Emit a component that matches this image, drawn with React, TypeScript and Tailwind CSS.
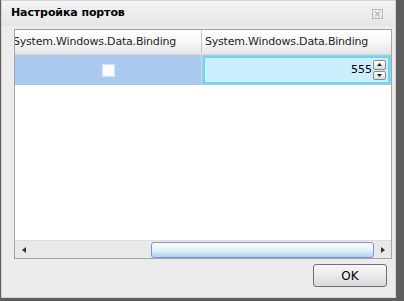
import React from 'react';

const font = { fontFamily: '"DejaVu Sans", Verdana, sans-serif' };

const App: React.FC = () => {
  return (
    <div className="w-[404px] h-[301px] bg-[#5e5e5e] flex" style={font}>
      <div className="ml-[1px] w-[395px] h-[298px] bg-[#ececec] border border-[#d4d4d4] flex flex-col">
        {/* title bar */}
        <div className="h-[25px] flex items-center justify-between pl-[9px] pr-[12px] bg-gradient-to-b from-[#f4f4f4] to-[#e6e6e6]">
          <span className="text-[11px] font-bold text-black tracking-[-0.1px]">Настройка портов</span>
          <svg width="11" height="10" viewBox="0 0 11 10" className="text-[#b8b8b8]">
            <rect x="0.5" y="0.5" width="10" height="9" fill="none" stroke="currentColor" />
            <path d="M3 2.5 L8 7.5 M8 2.5 L3 7.5" stroke="currentColor" strokeWidth="1.2" />
          </svg>
        </div>

        {/* grid */}
        <div className="mt-[3px] ml-[12px] w-[378px] h-[230px] border border-[#a5a5a5] bg-white flex flex-col overflow-hidden">
          <div className="h-[25px] flex border-b border-[#d5d5d5] bg-gradient-to-b from-[#ffffff] via-[#f7f7f7] to-[#e6e6e6] text-[11px] tracking-[-0.2px] text-[#1e1e1e]">
            <div className="w-[187px] border-r border-[#c8c8c8] flex items-center overflow-hidden">
              <span className="ml-[-2px] whitespace-nowrap">System.Windows.Data.Binding</span>
            </div>
            <div className="flex-1 flex items-center pl-[3px] whitespace-nowrap">System.Windows.Data.Binding</div>
          </div>

          <div className="h-[30px] flex">
            <div className="w-[187px] bg-[#a9c9ef] flex items-center justify-center border-r border-[#c8d8ea]">
              <div className="w-[13px] h-[13px] bg-white border border-[#d8e4f2] shadow-[inset_0_0_1px_#c0c0c0]" />
            </div>
            <div className="flex-1 bg-[#a9c9ef] p-[1px]">
              <div className="h-full border-2 border-[#6ad8ee] bg-[#cdeefc] flex items-center justify-end pr-[2px] text-[11px] text-black">
                <span className="mr-[1px]">555</span>
                <div className="w-[13px] h-[20px] flex flex-col gap-[1px]">
                  <div className="flex-1 border border-[#8a8a8a] rounded-[2px] bg-gradient-to-b from-white to-[#dcdcdc] flex items-center justify-center">
                    <svg width="5" height="3" viewBox="0 0 5 3"><path d="M0 3 L2.5 0 L5 3 Z" fill="#222" /></svg>
                  </div>
                  <div className="flex-1 border border-[#8a8a8a] rounded-[2px] bg-gradient-to-b from-white to-[#dcdcdc] flex items-center justify-center">
                    <svg width="5" height="3" viewBox="0 0 5 3"><path d="M0 0 L2.5 3 L5 0 Z" fill="#222" /></svg>
                  </div>
                </div>
              </div>
            </div>
          </div>

          <div className="flex-1" />

          {/* horizontal scrollbar */}
          <div className="h-[18px] flex items-center bg-[#e9e9e9] border-t border-[#dedede]">
            <div className="w-[17px] flex justify-center">
              <svg width="4" height="6" viewBox="0 0 4 6"><path d="M4 0 L0 3 L4 6 Z" fill="#333" /></svg>
            </div>
            <div className="w-[119px]" />
            <div className="w-[223px] h-[16px] rounded-[3px] border border-[#7d95c8] bg-gradient-to-b from-[#fafcff] via-[#e6f1fc] to-[#a9d3f5]" />
            <div className="flex-1 flex justify-center">
              <svg width="4" height="6" viewBox="0 0 4 6"><path d="M0 0 L4 3 L0 6 Z" fill="#333" /></svg>
            </div>
          </div>
        </div>

        {/* footer */}
        <div className="flex justify-end pr-[8px] pt-[5px]">
          <button className="w-[74px] h-[23px] rounded-[3px] border border-[#707070] bg-gradient-to-b from-[#f6f6f6] via-[#ebebeb] to-[#d8d8d8] text-[12px] text-black">
            OK
          </button>
        </div>
      </div>
    </div>
  );
};

export default App;
